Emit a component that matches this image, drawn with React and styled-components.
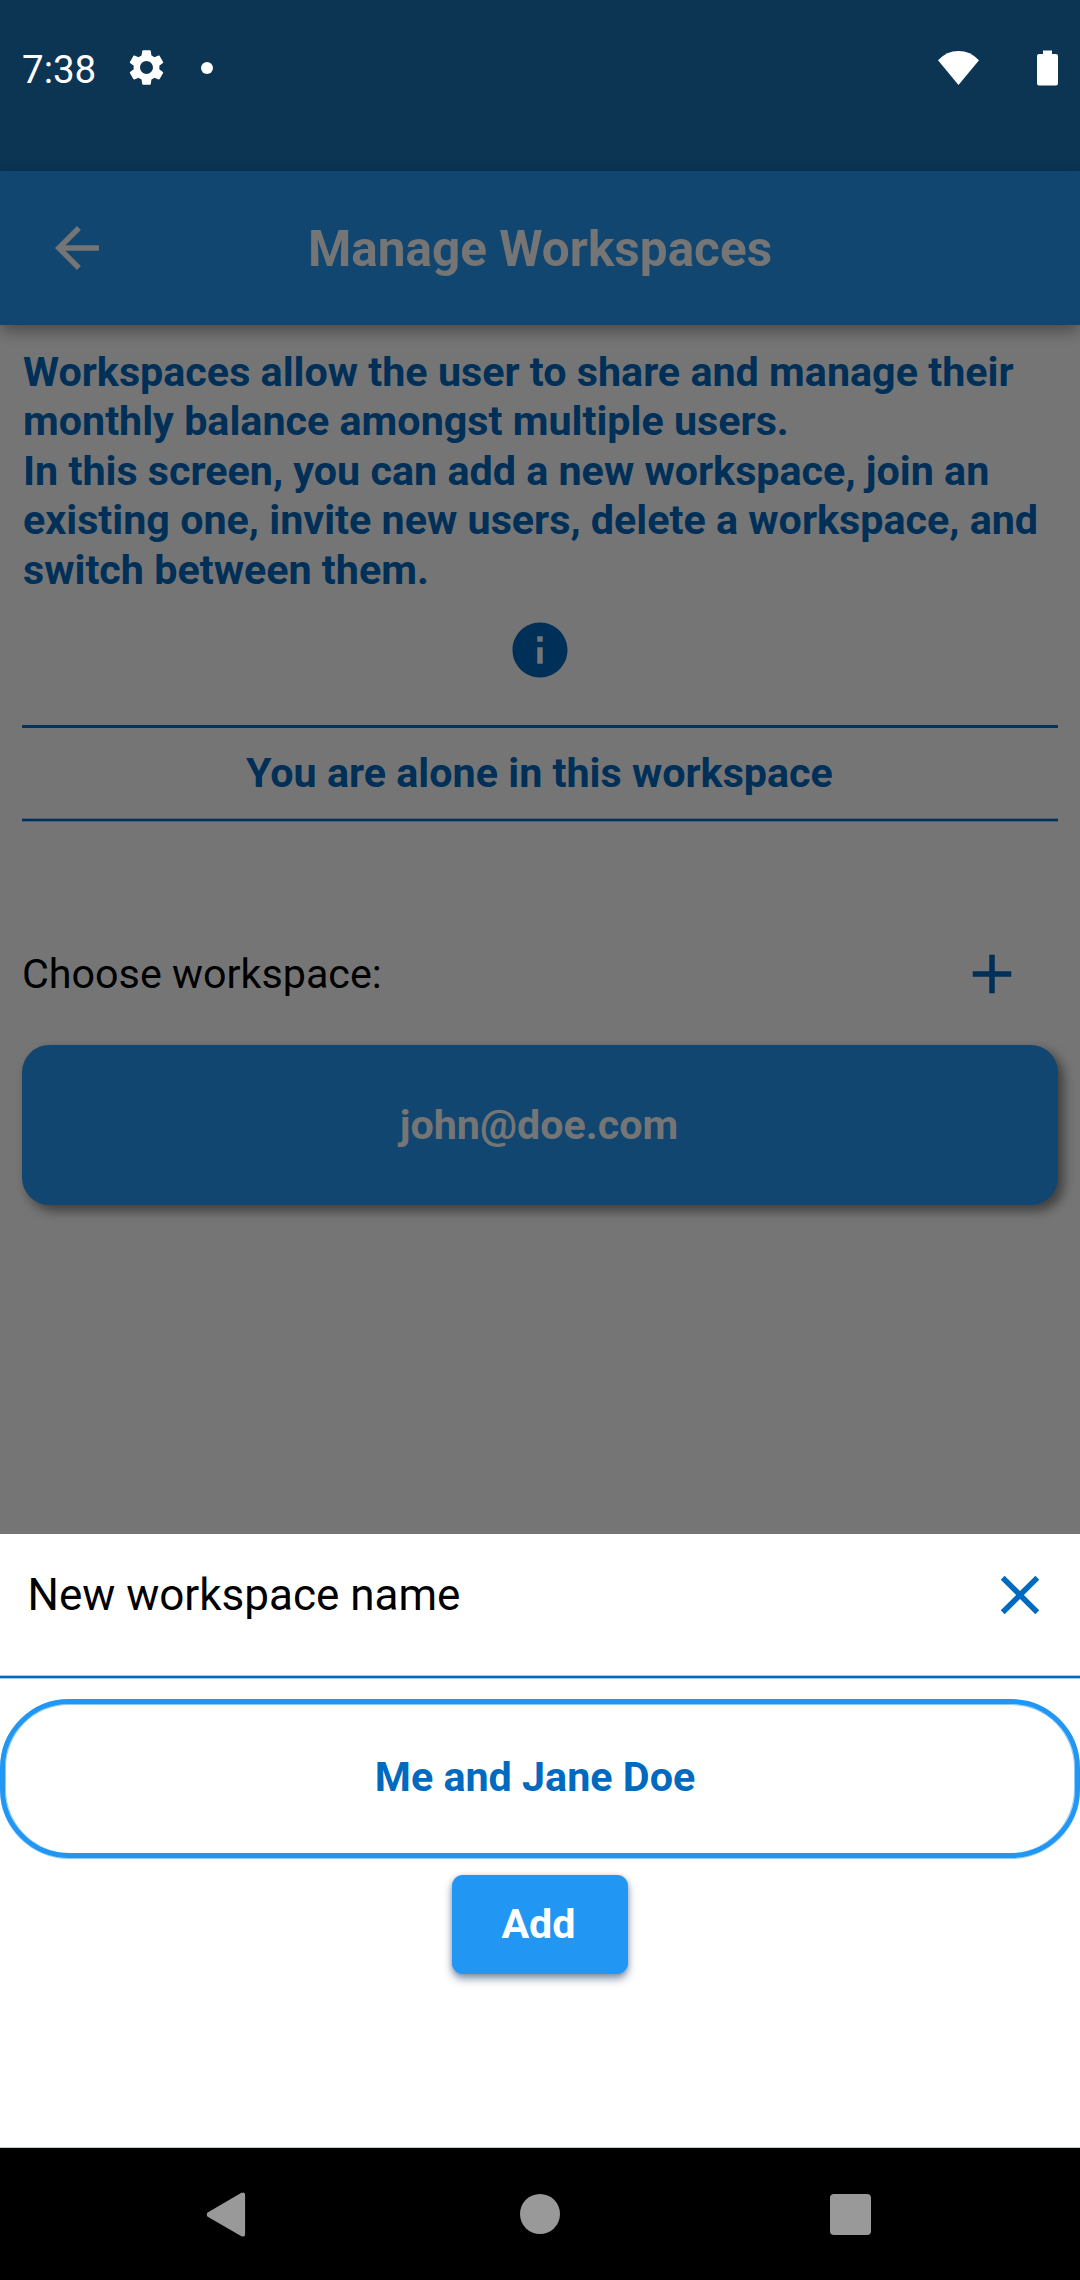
import React from "react";
import styled, { createGlobalStyle } from "styled-components";

const GlobalStyle = createGlobalStyle`
  * { box-sizing: border-box; }
  body { margin: 0; background: #757575; font-family: Roboto, "Liberation Sans", sans-serif; }
`;

const Screen = styled.div`
  width: 1080px;
  height: 2280px;
  display: flex;
  flex-direction: column;
  background: #757575;
  overflow: hidden;
`;

const StatusBar = styled.header`
  height: 171px;
  padding: 34px 22px 0;
  display: flex;
  align-items: flex-start;
  justify-content: space-between;
  background: #0c3453;
  color: #fff;
`;

const StatusGroup = styled.div`
  height: 67px;
  display: flex;
  align-items: center;
`;

const Clock = styled.span`
  width: 103px;
  font-size: 38.5px;
  line-height: 67px;
  padding-top: 3px;
`;

const Dot = styled.span`
  width: 12px;
  height: 12px;
  margin-left: 33px;
  border-radius: 50%;
  background: #fff;
`;

const StatusIcon = styled.svg`
  display: block;
  fill: #fff;
  width: ${(p) => p.$w}px;
  height: ${(p) => p.$h}px;
  margin-left: ${(p) => p.$gap || 0}px;
`;

const AppBar = styled.div`
  height: 154px;
  flex: none;
  display: grid;
  grid-template-columns: 154px 1fr 154px;
  align-items: center;
  background: #10466f;
  color: #757575;
  box-shadow: 0 11px 14px -3px rgba(0, 0, 0, 0.2), 0 3px 14px rgba(0, 0, 0, 0.2);
`;

const IconButton = styled.button`
  width: 66px;
  height: 66px;
  padding: 0;
  border: 0;
  background: none;
  color: ${(p) => p.$color};
  justify-self: center;
  svg { display: block; width: 66px; height: 66px; fill: currentColor; }
`;

const AppTitle = styled.h1`
  margin: 0;
  text-align: center;
  font-size: 49.5px;
  font-weight: 700;
  line-height: 60px;
  padding-top: 1px;
`;

const Content = styled.main`
  height: 1209px;
  flex: none;
  padding: 22px 22px 0;
  display: flex;
  flex-direction: column;
`;

const Intro = styled.p`
  margin: 0 0 23px;
  padding: 1px 0 0 1px;
  height: 247px;
  font-size: 41.25px;
  font-weight: 700;
  line-height: 49.4px;
  color: #002f58;
  white-space: nowrap;
`;

const InfoRow = styled.div`
  height: 108px;
  display: flex;
  justify-content: center;
`;

const Rule = styled.div`
  height: 3px;
  flex: none;
  background: ${(p) => p.$color};
`;

const SoftRule = styled.div`
  height: 4px;
  flex: none;
  background: linear-gradient(${(p) => p.$edge} 1px, ${(p) => p.$color} 1px 3px, ${(p) => p.$edge} 3px);
`;

const Notice = styled.div`
  height: 90px;
  line-height: 90px;
  padding-right: 1px;
  text-align: center;
  font-size: 41.25px;
  font-weight: 700;
  color: #002f58;
`;

const ChooseRow = styled.div`
  height: 66px;
  margin-top: 119px;
  padding-right: 33px;
  display: flex;
  align-items: center;
  justify-content: space-between;
  font-size: 41.25px;
  color: #000;
`;

const WorkspaceCard = styled.div`
  height: 160px;
  margin-top: 38px;
  padding-right: 2px;
  border-radius: 27.5px;
  display: flex;
  align-items: center;
  justify-content: center;
  background: #10466f;
  color: #757575;
  font-size: 41.25px;
  font-weight: 700;
  box-shadow: 5.5px 5.5px 11px rgba(0, 0, 0, 0.45);
`;

const Sheet = styled.section`
  height: 614px;
  flex: none;
  display: flex;
  flex-direction: column;
  align-items: center;
  background: #fff;
  border-bottom: 1px solid #b9cbdb;
`;

const SheetHeader = styled.div`
  align-self: stretch;
  height: 141px;
  padding: 28px 27.5px 0;
  display: flex;
  align-items: flex-start;
  justify-content: space-between;
`;

const SheetTitle = styled.h2`
  margin: 0;
  font-size: 44px;
  font-weight: 400;
  line-height: 66px;
  color: #000;
`;

const SheetRule = styled(SoftRule)`
  width: 100%;
`;

const NameField = styled.div`
  width: 100%;
  height: 159px;
  margin-top: 20px;
  padding: 0 10px 3px 0;
  border: 5px solid #2196f3;
  border-radius: 69px;
  box-shadow: inset 0 1px #90cbf9, inset 1px 0 #90cbf9, inset -1px 0 #90cbf9, 0 1px #90cbf9;
  display: flex;
  align-items: center;
  justify-content: center;
  color: #0069c0;
  font-size: 41.25px;
  font-weight: 700;
`;

const AddButton = styled.button`
  width: 176px;
  height: 99px;
  margin-top: 17px;
  padding: 0 3px 2px 0;
  border: 0;
  border-radius: 11px;
  background: #2196f3;
  color: #fff;
  font-family: inherit;
  font-size: 41.25px;
  font-weight: 700;
  box-shadow: 0 5px 8px rgba(0, 40, 90, 0.45), 0 1px 5px rgba(0, 40, 90, 0.2);
`;

const NavBar = styled.nav`
  flex: 1;
  display: grid;
  grid-template-columns: 195px 230px 230px 230px 195px;
  align-items: center;
  justify-items: center;
  background: #000;
  svg { display: block; fill: #999; }
`;

const NavSlot = styled.span`
  grid-column: ${(p) => p.$col};
  transform: translate(${(p) => p.$dx || 0}px, 0);
`;

export default function App() {
  return (
    <Screen>
      <GlobalStyle />
      <StatusBar>
        <StatusGroup>
          <Clock>7:38</Clock>
          <StatusIcon $w={43} $h={43} viewBox="0 0 24 24">
            <path d="M19.14 12.94c.04-.3.06-.61.06-.94 0-.32-.02-.64-.07-.94l2.03-1.58c.18-.14.23-.41.12-.61l-1.92-3.32c-.12-.22-.37-.29-.59-.22l-2.39.96c-.5-.38-1.03-.7-1.62-.94L14.4 2.81c-.04-.24-.24-.41-.48-.41h-3.84c-.24 0-.43.17-.47.41l-.36 2.54c-.59.24-1.13.57-1.62.94l-2.39-.96c-.22-.08-.47 0-.59.22L2.74 8.87c-.12.21-.08.47.12.61l2.03 1.58c-.05.3-.09.63-.09.94s.02.64.07.94l-2.03 1.58c-.18.14-.23.41-.12.61l1.92 3.32c.12.22.37.29.59.22l2.39-.96c.5.38 1.03.7 1.62.94l.36 2.54c.05.24.24.41.48.41h3.84c.24 0 .44-.17.47-.41l.36-2.54c.59-.24 1.13-.56 1.62-.94l2.39.96c.22.08.47 0 .59-.22l1.92-3.32c.12-.22.07-.47-.12-.61l-2.01-1.58zM12 15.6c-1.98 0-3.6-1.62-3.6-3.6s1.62-3.6 3.6-3.6 3.6 1.62 3.6 3.6-1.62 3.6-3.6 3.6z" />
          </StatusIcon>
          <Dot />
        </StatusGroup>
        <StatusGroup>
          <StatusIcon $w={41} $h={34} viewBox="0 0 41 34">
            <path d="M0 9.3Q8.500 0 20.500 0T41 9.300L20.500 34z" />
          </StatusIcon>
          <StatusIcon $w={21} $h={36} $gap={58} viewBox="0 0 21 36">
            <path d="M6 .4h9V4h4q2 0 2 2v27.600q0 2-2 2H2q-2 0-2-2V6q0-2 2-2h4z" />
          </StatusIcon>
        </StatusGroup>
      </StatusBar>

      <AppBar>
        <IconButton $color="#757575" aria-label="Back">
          <svg viewBox="0 0 24 24"><path d="M20 11H7.830l5.590-5.590L12 4l-8 8 8 8 1.410-1.410L7.830 13H20v-2z" /></svg>
        </IconButton>
        <AppTitle>Manage Workspaces</AppTitle>
      </AppBar>

      <Content>
        <Intro>
          Workspaces allow the user to share and manage their<br />
          monthly balance amongst multiple users.<br />
          In this screen, you can add a new workspace, join an<br />
          existing one, invite new users, delete a workspace, and<br />
          switch between them.
        </Intro>
        <InfoRow>
          <IconButton $color="#002f58" aria-label="Info">
            <svg viewBox="0 0 24 24"><path d="M12 2C6.480 2 2 6.480 2 12s4.480 10 10 10 10-4.480 10-10S17.520 2 12 2zm1 15h-2v-6h2v6zm0-8h-2V7h2v2z" /></svg>
          </IconButton>
        </InfoRow>
        <Rule $color="#053360" />
        <Notice>You are alone in this workspace</Notice>
        <SoftRule $color="#002f58" $edge="#48607a" />
        <ChooseRow>
          <span>Choose workspace:</span>
          <IconButton $color="#002f58" aria-label="Add workspace">
            <svg viewBox="0 0 24 24"><path d="M19 13h-6v6h-2v-6H5v-2h6V5h2v6h6v2z" /></svg>
          </IconButton>
        </ChooseRow>
        <WorkspaceCard>john@doe.com</WorkspaceCard>
      </Content>

      <Sheet>
        <SheetHeader>
          <SheetTitle>New workspace name</SheetTitle>
          <IconButton $color="#0069c0" aria-label="Close">
            <svg viewBox="0 0 24 24"><path d="M19 6.410L17.590 5 12 10.590 6.410 5 5 6.410 10.590 12 5 17.590 6.410 19 12 13.410 17.590 19 19 17.590 13.410 12z" /></svg>
          </IconButton>
        </SheetHeader>
        <SheetRule $color="#0069c0" $edge="#a3c9e8" />
        <NameField>Me and Jane Doe</NameField>
        <AddButton>Add</AddButton>
      </Sheet>

      <NavBar>
        <NavSlot $col={2} $dx={-84.5}>
          <svg width="39" height="45" viewBox="0 0 39 45"><path d="M1.200 20.600L34.500 1Q38.700-.9 38.700 3V42Q38.700 45.900 34.500 44L1.200 24.800Q-1 22.600 1.200 20.600z" /></svg>
        </NavSlot>
        <NavSlot $col={3}>
          <svg width="40" height="40" viewBox="0 0 40 40"><circle cx="20" cy="20" r="20" /></svg>
        </NavSlot>
        <NavSlot $col={4} $dx={80}>
          <svg width="41" height="41" viewBox="0 0 41 41"><rect width="41" height="41" rx="4" /></svg>
        </NavSlot>
      </NavBar>
    </Screen>
  );
}
